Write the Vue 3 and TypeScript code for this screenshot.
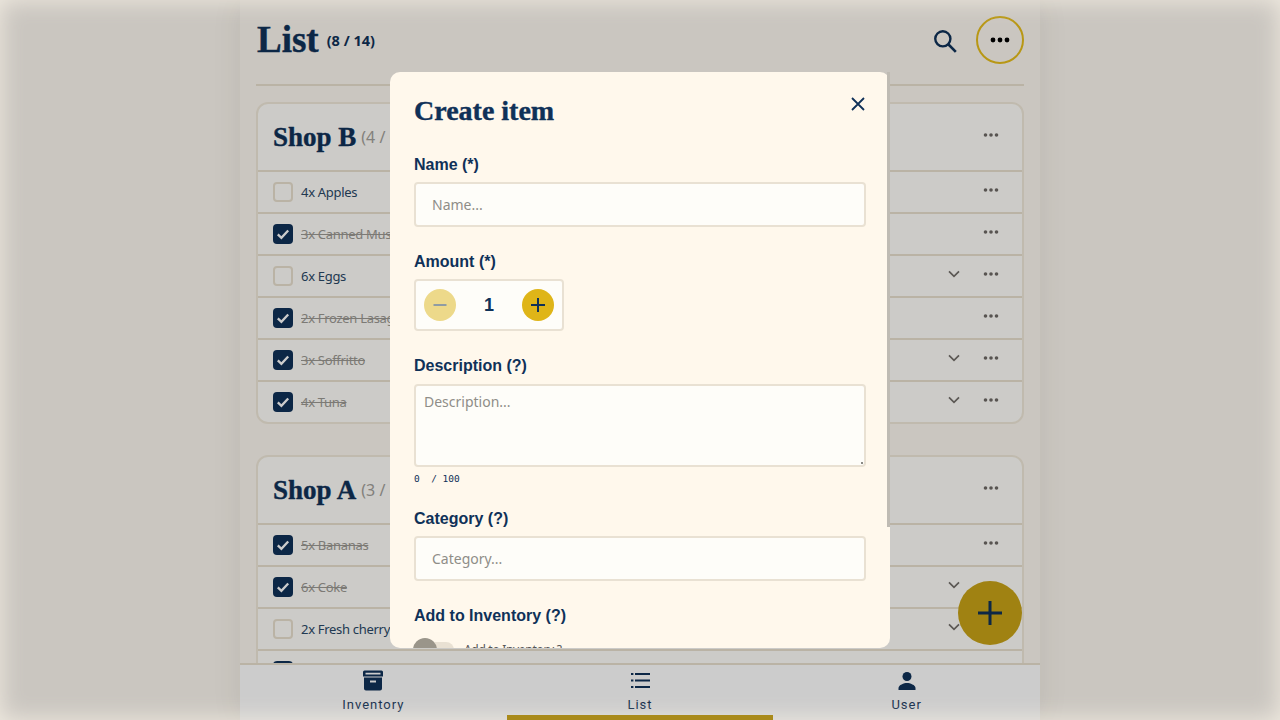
<script setup lang="ts">
import { ref } from 'vue';

interface Item {
  label: string;
  done: boolean;
  more: boolean;
}

interface Shop {
  name: string;
  count: string;
  items: Item[];
}

const shops: Shop[] = [
  {
    name: 'Shop B',
    count: '(4 / 6)',
    items: [
      { label: '4x Apples', done: false, more: false },
      { label: '3x Canned Mushrooms', done: true, more: false },
      { label: '6x Eggs', done: false, more: true },
      { label: '2x Frozen Lasagna', done: true, more: false },
      { label: '3x Soffritto', done: true, more: true },
      { label: '4x Tuna', done: true, more: true },
    ],
  },
  {
    name: 'Shop A',
    count: '(3 / 6)',
    items: [
      { label: '5x Bananas', done: true, more: false },
      { label: '6x Coke', done: true, more: true },
      { label: '2x Fresh cherry tomatoes', done: false, more: true },
      { label: '3x Oranges', done: true, more: false },
    ],
  },
];

const tabs = ['Inventory', 'List', 'User'];
const activeTab = ref('List');
const amount = ref(1);
const counterText = '0  / 100';
</script>

<template>
  <div class="screen">
    <div class="column">
      <main class="main">
        <header class="top">
          <div class="heading">
            <h1>List</h1>
            <span class="total">(8 / 14)</span>
          </div>
          <div class="top-actions">
            <svg class="search" viewBox="0 0 24 24" width="26" height="26">
              <circle cx="10" cy="10" r="7" fill="none" stroke="#0f3158" stroke-width="2.2" />
              <path d="M15 15l7 7" stroke="#0f3158" stroke-width="2.4" />
            </svg>
            <button class="menu-btn">
              <svg viewBox="0 0 20 6" width="20" height="6"><circle cx="3" cy="3" r="2.4" /><circle cx="10" cy="3" r="2.4" /><circle cx="17" cy="3" r="2.4" /></svg>
            </button>
          </div>
        </header>

        <section v-for="shop in shops" :key="shop.name" class="card">
          <div class="card-head">
            <div class="shop-title">
              <h2>{{ shop.name }}</h2>
              <span class="shop-count">{{ shop.count }}</span>
            </div>
            <span class="icon-btn">
              <svg viewBox="0 0 16 4" width="16" height="4"><circle cx="2.5" cy="2" r="1.8" /><circle cx="8" cy="2" r="1.8" /><circle cx="13.5" cy="2" r="1.8" /></svg>
            </span>
          </div>
          <div v-for="item in shop.items" :key="item.label" class="row">
            <span class="check" :class="{ on: item.done }">
              <svg v-if="item.done" viewBox="0 0 20 20" width="20" height="20">
                <path d="M4.8 10.4l3.6 3.5 6.8-7.4" fill="none" stroke="#fff" stroke-width="2.3" />
              </svg>
            </span>
            <span class="label" :class="{ done: item.done }">{{ item.label }}</span>
            <div class="row-actions">
              <span v-if="item.more" class="icon-btn">
                <svg viewBox="0 0 12 8" width="12" height="8"><path d="M1 1.3l5 5 5-5" fill="none" stroke="#736f6a" stroke-width="1.7" /></svg>
              </span>
              <span class="icon-btn">
                <svg viewBox="0 0 16 4" width="16" height="4"><circle cx="2.5" cy="2" r="1.8" /><circle cx="8" cy="2" r="1.8" /><circle cx="13.5" cy="2" r="1.8" /></svg>
              </span>
            </div>
          </div>
        </section>
      </main>

      <button class="fab">
        <svg viewBox="0 0 24 24" width="24" height="24"><path d="M12 0v24M0 12h24" stroke="#0f3158" stroke-width="3" /></svg>
      </button>

      <nav class="tabs">
        <div v-for="tab in tabs" :key="tab" class="tab" :class="{ active: tab === activeTab }">
          <svg v-if="tab === 'Inventory'" viewBox="0 0 24 24" width="24" height="24">
            <path fill="#0f3158" fill-rule="evenodd" d="M3.5 1.5h17a1.5 1.5 0 0 1 1.5 1.5v4.5H2V3a1.5 1.5 0 0 1 1.500-1.500zM4.500 3.800h15v1.700h-15zM3 8.500h18v11a2 2 0 0 1-2 2H5a2 2 0 0 1-2-2zm6 3v2h6v-2z" />
          </svg>
          <svg v-else-if="tab === 'List'" viewBox="0 0 24 24" width="24" height="24">
            <path d="M7 5h15M7 11.500h15M7 18h15" stroke="#0f3158" stroke-width="2" />
            <path d="M3 4h2.400v2H3zM3 10.500h2.400v2H3zM3 17h2.400v2H3z" fill="#0f3158" />
          </svg>
          <svg v-else viewBox="0 0 24 24" width="24" height="24">
            <circle cx="12" cy="7.500" r="4.500" fill="#0f3158" />
            <path d="M3.500 21v-2c0-3 5.500-5 8.500-5s8.500 2 8.500 5v2z" fill="#0f3158" />
          </svg>
          <span>{{ tab }}</span>
        </div>
      </nav>
    </div>

    <div class="overlay">
      <div class="modal">
        <div class="modal-body">
          <div class="modal-head">
            <h3>Create item</h3>
            <button class="close">
              <svg viewBox="0 0 14 14" width="14" height="14"><path d="M1 1l12 12M13 1L1 13" stroke="#0f3158" stroke-width="1.800" /></svg>
            </button>
          </div>

          <div class="field">
            <label>Name (*)</label>
            <input class="input" type="text" placeholder="Name..." />
          </div>

          <div class="field">
            <label>Amount (*)</label>
            <div class="stepper">
              <span class="step minus"><svg viewBox="0 0 16 16" width="16" height="16"><path d="M1.500 8h13" stroke="#8f9ca3" stroke-width="2" /></svg></span>
              <span class="amount">{{ amount }}</span>
              <span class="step plus"><svg viewBox="0 0 16 16" width="16" height="16"><path d="M8 1v14M1 8h14" stroke="#0f3158" stroke-width="2" /></svg></span>
            </div>
          </div>

          <div class="field">
            <label>Description (?)</label>
            <textarea class="area" placeholder="Description..."></textarea>
            <div class="counter">{{ counterText }}</div>
          </div>

          <div class="field">
            <label>Category (?)</label>
            <input class="input" type="text" placeholder="Category..." />
          </div>

          <div class="field">
            <label>Add to Inventory (?)</label>
            <div class="switch-row">
              <span class="switch"><span class="knob"></span></span>
              <span class="switch-text">Add to Inventory ?</span>
            </div>
          </div>
        </div>
        <div class="scroll-thumb"></div>
      </div>
    </div>
  </div>
</template>

<style>
html,
body {
  margin: 0;
  height: 100%;
  overflow: hidden;
  background: #fdf8f0;
}
</style>

<style scoped>
* {
  box-sizing: border-box;
}

.screen {
  position: relative;
  width: 1280px;
  height: 720px;
  overflow: hidden;
  display: flex;
  justify-content: center;
  font-family: "Noto Sans", "Open Sans", sans-serif;
  color: #0f3158;
}

.column {
  position: relative;
  width: 800px;
  height: 720px;
  display: flex;
  flex-direction: column;
  background: #fdf8f0;
  box-shadow: 0 0 30px rgba(0, 0, 0, .07);
}

.main {
  flex: 1;
  min-height: 0;
  overflow: hidden;
  padding: 0 16px;
}

.top {
  height: 86px;
  padding-top: 16px;
  margin-bottom: 16px;
  display: flex;
  justify-content: space-between;
  align-items: flex-start;
  border-bottom: 2px solid #e9e0cf;
}

.heading {
  display: flex;
  align-items: center;
  gap: 8px;
  height: 48px;
  padding-left: 1px;
}

h1,
h2,
h3 {
  margin: 0;
  font-family: "Liberation Serif", "DejaVu Serif", serif;
  font-weight: 700;
  -webkit-text-stroke: .4px #0f3158;
}

h1 {
  font-size: 37px;
  line-height: 48px;
}

.total {
  font-size: 14.500px;
  font-weight: 700;
}

.top-actions {
  display: flex;
  align-items: center;
  gap: 18px;
}

.search {
  margin-top: 1px;
}

.menu-btn {
  width: 48px;
  height: 48px;
  padding: 0;
  display: flex;
  align-items: center;
  justify-content: center;
  background: none;
  border: 2px solid #e6bd1a;
  border-radius: 50%;
}

.card {
  margin-bottom: 31px;
  background: #fffefa;
  border: 2px solid #f0e9da;
  border-radius: 12px;
}

.card-head {
  height: 66px;
  padding: 0 15px;
  display: flex;
  align-items: center;
  justify-content: space-between;
}

.shop-title {
  display: flex;
  align-items: center;
  gap: 5px;
}

h2 {
  font-size: 27px;
}

.shop-count {
  font-size: 16px;
  color: #a3a19b;
}

.icon-btn {
  width: 32px;
  height: 32px;
  display: flex;
  align-items: center;
  justify-content: center;
  fill: #6e6a66;
}

.card-head .icon-btn {
  margin-bottom: 4px;
}

.row {
  height: 42px;
  padding: 0 15px;
  display: flex;
  align-items: center;
  gap: 8px;
  border-top: 2px solid #e9e0cf;
}

.check {
  width: 20px;
  height: 20px;
  flex: none;
  border: 2px solid #e9e0cf;
  border-radius: 4px;
}

.check.on {
  background: #0f3158;
  border: 0;
}

.check svg {
  display: block;
}

.label {
  font-size: 13px;
  letter-spacing: -.3px;
  color: #2a4866;
}

.label.done {
  color: #9b9993;
  text-decoration: line-through;
}

.row-actions {
  margin-left: auto;
  margin-bottom: 4px;
  display: flex;
  gap: 5px;
}

.fab {
  position: absolute;
  right: 18px;
  bottom: 75px;
  width: 64px;
  height: 64px;
  padding: 0;
  display: flex;
  align-items: center;
  justify-content: center;
  background: #c8a317;
  border: 0;
  border-radius: 50%;
}

.tabs {
  position: relative;
  flex: none;
  height: 57px;
  display: grid;
  grid-template-columns: repeat(3, 1fr);
  background: #ffffff;
  border-top: 2px solid #e9e0cf;
}

.tab {
  position: relative;
  display: flex;
  flex-direction: column;
  align-items: center;
  padding-top: 4px;
  font-family: "Roboto", "Liberation Sans", sans-serif;
  font-size: 13px;
  line-height: 17px;
  letter-spacing: 1px;
}

.tab span {
  margin-top: 3px;
}

.tab.active::after {
  content: "";
  position: absolute;
  left: 0;
  right: 0;
  bottom: 0;
  z-index: 2;
  height: 5px;
  background: #a98a1a;
}

.overlay {
  position: absolute;
  inset: 0;
  display: flex;
  align-items: center;
  justify-content: center;
  background: rgba(0, 0, 0, .2);
  box-shadow: inset 0 0 24px rgba(255, 248, 236, .75);
}

.modal {
  position: relative;
  width: 500px;
  height: 80%;
  background: #fff8ec;
  border-radius: 10px;
}

.modal-body {
  height: 100%;
  overflow: hidden;
  padding: 24px;
  border-radius: inherit;
}

.scroll-thumb {
  position: absolute;
  top: 0;
  right: 0;
  width: 3px;
  height: 455px;
  background: #bfbbb3;
}

.modal-head {
  height: 59px;
  display: flex;
  justify-content: space-between;
  align-items: flex-start;
}

h3 {
  font-size: 28px;
  line-height: 30px;
}

.close {
  width: 24px;
  height: 24px;
  margin: -4px -4px 0 0;
  padding: 0;
  display: flex;
  align-items: center;
  justify-content: center;
  background: none;
  border: 0;
}

.field {
  margin-bottom: 25px;
}

.field label {
  display: block;
  margin-bottom: 7px;
  font-family: "Liberation Sans", Arial, sans-serif;
  font-size: 16px;
  font-weight: 700;
  line-height: 20px;
}

.input {
  display: block;
  width: 100%;
  height: 45px;
  padding: 0 16px;
  font-family: "Noto Sans", sans-serif;
  font-size: 14px;
  background: #fefdf9;
  border: 2px solid #e9e1d3;
  border-radius: 4px;
  outline: none;
}

.input::placeholder,
.area::placeholder {
  color: #8f8d88;
}

.stepper {
  width: 150px;
  height: 52px;
  padding: 0 8px;
  display: flex;
  align-items: center;
  justify-content: space-between;
  background: #fefdf9;
  border: 2px solid #e9e1d3;
  border-radius: 4px;
}

.step {
  width: 32px;
  height: 32px;
  display: flex;
  align-items: center;
  justify-content: center;
  border-radius: 50%;
}

.step.minus {
  background: #edd98a;
}

.step.plus {
  background: #dfb518;
}

.amount {
  font-family: "Liberation Sans", Arial, sans-serif;
  font-size: 18px;
  font-weight: 700;
}

.area {
  display: block;
  width: 100%;
  height: 83px;
  margin-top: 8px;
  padding: 6px 8px;
  font-family: "Noto Sans", sans-serif;
  font-size: 14px;
  background: #fefdf9 linear-gradient(#8a8a85, #8a8a85) no-repeat right 1px bottom 1px / 2px 2px;
  border: 2px solid #e9e1d3;
  border-radius: 4px;
  outline: none;
  resize: none;
}

.counter {
  height: 17px;
  padding-top: 5px;
  font-family: "DejaVu Sans Mono", monospace;
  font-size: 9.500px;
  line-height: 14px;
  white-space: pre;
}

.switch-row {
  display: flex;
  align-items: center;
  gap: 10px;
  margin-top: 12px;
}

.switch {
  position: relative;
  width: 40px;
  height: 16px;
  background: #e9e1d3;
  border-radius: 8px;
}

.knob {
  position: absolute;
  left: -1px;
  top: -4px;
  width: 24px;
  height: 24px;
  background: #9a958a;
  border-radius: 50%;
}

.switch-text {
  font-size: 12px;
  letter-spacing: -.3px;
  line-height: 24px;
  color: #555;
}
</style>
